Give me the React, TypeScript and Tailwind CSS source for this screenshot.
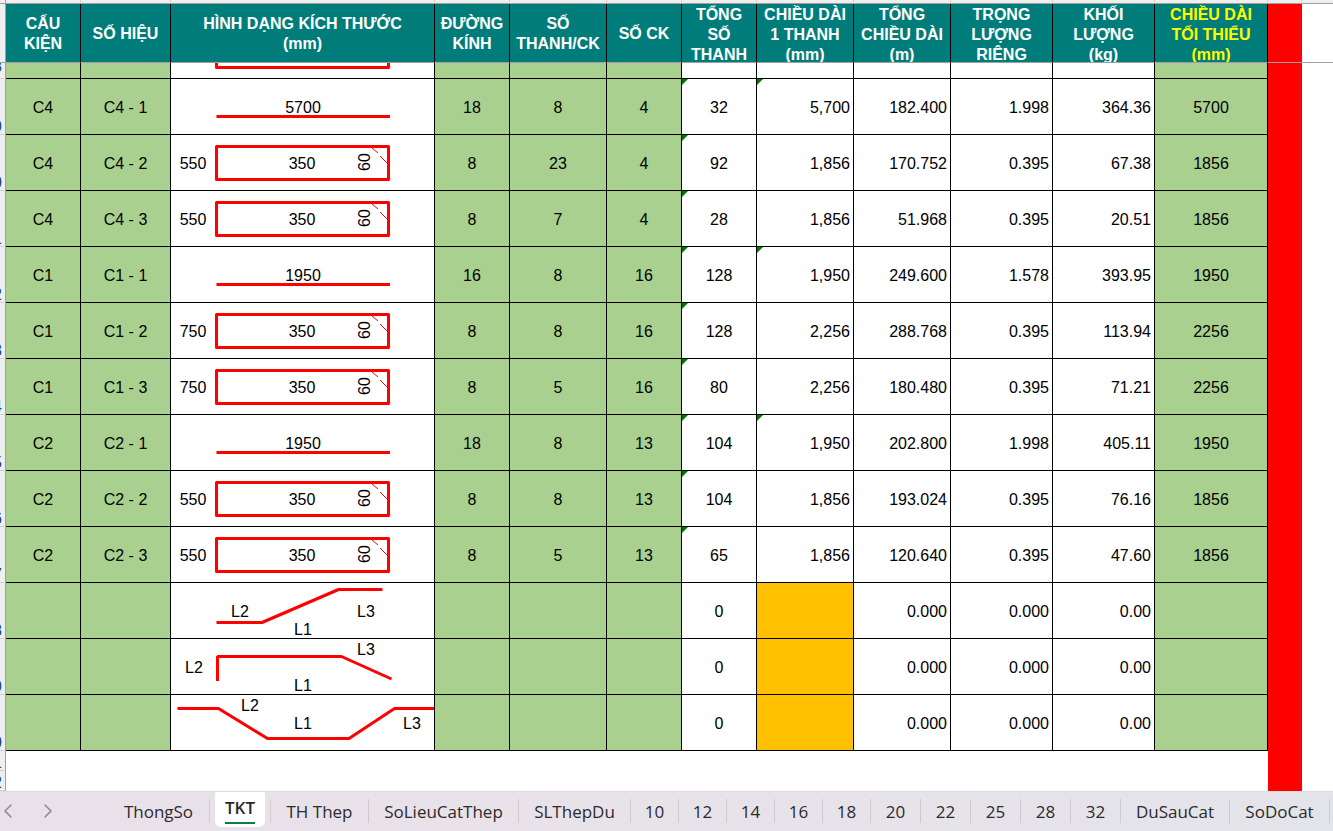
import React from "react";
import clsx from "clsx";
import { ChevronLeft, ChevronRight } from "lucide-react";

const columns = [
  { title: "CẤU\nKIỆN", width: "w-[75px]" },
  { title: "SỐ HIỆU", width: "w-[90px]" },
  { title: "HÌNH DẠNG KÍCH THƯỚC\n(mm)", width: "w-[264px]" },
  { title: "ĐƯỜNG\nKÍNH", width: "w-[75px]" },
  { title: "SỐ\nTHANH/CK", width: "w-[97px]" },
  { title: "SỐ CK", width: "w-[75px]" },
  { title: "TỔNG\nSỐ\nTHANH", width: "w-[75px]" },
  { title: "CHIỀU DÀI\n1 THANH\n(mm)", width: "w-[97px]" },
  { title: "TỔNG\nCHIỀU DÀI\n(m)", width: "w-[97px]" },
  { title: "TRỌNG\nLƯỢNG\nRIÊNG", width: "w-[102px]" },
  { title: "KHỐI\nLƯỢNG\n(kg)", width: "w-[102px]" },
  { title: "CHIỀU DÀI\nTỐI THIỂU\n(mm)", width: "w-[113px]" },
];

type Shape = "bar" | "stirrup" | "crankUp" | "hook" | "trough";

type Row = {
  no: number;
  shape: Shape;
  labels: string[];
  // cấu kiện, số hiệu, đường kính, số thanh/ck, số ck
  input: string[];
  total: string;
  length: string;
  // tổng chiều dài, trọng lượng riêng, khối lượng
  result: string[];
  min: string;
};

const rows: Row[] = [
  { no: 19, shape: "bar", labels: ["5700"], input: ["C4", "C4 - 1", "18", "8", "4"], total: "32", length: "5,700", result: ["182.400", "1.998", "364.36"], min: "5700" },
  { no: 20, shape: "stirrup", labels: ["550", "350", "60"], input: ["C4", "C4 - 2", "8", "23", "4"], total: "92", length: "1,856", result: ["170.752", "0.395", "67.38"], min: "1856" },
  { no: 21, shape: "stirrup", labels: ["550", "350", "60"], input: ["C4", "C4 - 3", "8", "7", "4"], total: "28", length: "1,856", result: ["51.968", "0.395", "20.51"], min: "1856" },
  { no: 22, shape: "bar", labels: ["1950"], input: ["C1", "C1 - 1", "16", "8", "16"], total: "128", length: "1,950", result: ["249.600", "1.578", "393.95"], min: "1950" },
  { no: 23, shape: "stirrup", labels: ["750", "350", "60"], input: ["C1", "C1 - 2", "8", "8", "16"], total: "128", length: "2,256", result: ["288.768", "0.395", "113.94"], min: "2256" },
  { no: 24, shape: "stirrup", labels: ["750", "350", "60"], input: ["C1", "C1 - 3", "8", "5", "16"], total: "80", length: "2,256", result: ["180.480", "0.395", "71.21"], min: "2256" },
  { no: 25, shape: "bar", labels: ["1950"], input: ["C2", "C2 - 1", "18", "8", "13"], total: "104", length: "1,950", result: ["202.800", "1.998", "405.11"], min: "1950" },
  { no: 26, shape: "stirrup", labels: ["550", "350", "60"], input: ["C2", "C2 - 2", "8", "8", "13"], total: "104", length: "1,856", result: ["193.024", "0.395", "76.16"], min: "1856" },
  { no: 27, shape: "stirrup", labels: ["550", "350", "60"], input: ["C2", "C2 - 3", "8", "5", "13"], total: "65", length: "1,856", result: ["120.640", "0.395", "47.60"], min: "1856" },
  { no: 28, shape: "crankUp", labels: [], input: ["", "", "", "", ""], total: "0", length: "", result: ["0.000", "0.000", "0.00"], min: "" },
  { no: 29, shape: "hook", labels: [], input: ["", "", "", "", ""], total: "0", length: "", result: ["0.000", "0.000", "0.00"], min: "" },
  { no: 30, shape: "trough", labels: [], input: ["", "", "", "", ""], total: "0", length: "", result: ["0.000", "0.000", "0.00"], min: "" },
];

const tabs = [
  { name: "TH Thep", width: "w-[98px]" },
  { name: "SoLieuCatThep", width: "w-[150px]" },
  { name: "SLThepDu", width: "w-[112px]" },
  { name: "10", width: "w-12" },
  { name: "12", width: "w-12" },
  { name: "14", width: "w-12" },
  { name: "16", width: "w-12" },
  { name: "18", width: "w-12" },
  { name: "20", width: "w-[50px]" },
  { name: "22", width: "w-[50px]" },
  { name: "25", width: "w-[50px]" },
  { name: "28", width: "w-[50px]" },
  { name: "32", width: "w-[50px]" },
  { name: "DuSauCat", width: "w-[109px]" },
  { name: "SoDoCat", width: "w-[100px]" },
];

const shapePaths: Record<Shape, string> = {
  bar: "M45.5 37.5H219",
  stirrup: "M45.5 11.5H217.5V44.5H45.5Z",
  crankUp: "M45.5 39.5H91L167.5 6.5H211.5",
  hook: "M46.5 42V17.5H170.5L220.5 40",
  trough: "M6.5 13.5H47.5L96.5 43.5H178L223.5 13.5H263",
};

// label positions [text, x, baseline] for the blank template rows
const templateLabels: Partial<Record<Shape, [string, number, number][]>> = {
  crankUp: [["L2", 69, 34], ["L1", 132, 52], ["L3", 195, 34]],
  hook: [["L2", 23, 34], ["L1", 132, 52], ["L3", 195, 16]],
  trough: [["L2", 79, 16], ["L1", 132, 34], ["L3", 241, 34]],
};

function BarShape({ shape, labels }: { shape: Shape; labels: string[] }) {
  return (
    <svg viewBox="0 0 263 55" className="block h-[55px] w-[263px] shrink-0" textAnchor="middle" fontSize="16">
      <path
        d={shapePaths[shape]}
        fill="none"
        stroke="#ff0000"
        strokeWidth="3"
        strokeLinejoin={shape === "stirrup" ? "round" : "bevel"}
      />
      {shape === "stirrup" && (
        <path d="M201 13L207 18M209 21L217 29" fill="none" stroke="#ff0000" strokeWidth="1" />
      )}
      {shape === "bar" && <text x="132" y="34">{labels[0]}</text>}
      {shape === "stirrup" && labels.length > 0 && (
        <>
          <text x="22" y="34">{labels[0]}</text>
          <text x="131" y="34">{labels[1]}</text>
          <text transform="translate(199 27) rotate(-90)">{labels[2]}</text>
        </>
      )}
      {templateLabels[shape]?.map(([text, x, y]) => (
        <text key={text} x={x} y={y}>{text}</text>
      ))}
    </svg>
  );
}

function RowNumber({ children }: { children: React.ReactNode }) {
  return (
    <th scope="row" className="border-r border-b border-r-[#a0a0a0] border-b-[#d0d0d0] bg-[#efefef] p-0 align-bottom font-normal">
      <div className="flex h-[15px] w-[5px] justify-end overflow-hidden pr-[3px] leading-4 text-[#1f3f77]">{children}</div>
    </th>
  );
}

function Cell({ className, children }: { className?: string; children?: React.ReactNode }) {
  return <td className={clsx("border-r border-b border-black px-0 pb-0", className)}>{children}</td>;
}

// green corner that marks an inconsistent formula
function ErrorMark() {
  return (
    <svg viewBox="0 0 6 6" className="absolute top-0 left-0 size-1.5">
      <path d="M0 0H6L0 6Z" fill="#007a00" />
    </svg>
  );
}

function Margin({ line = false }: { line?: boolean }) {
  return (
    <>
      <td className={clsx("bg-[#ff0000] p-0", line && "border-b border-[#a0a0a0]")} />
      <td className={clsx("p-0", line && "border-b border-[#a0a0a0]")} />
    </>
  );
}

function DataRow({ row }: { row: Row }) {
  const [part, mark, ...counts] = row.input;
  return (
    <tr className="h-14">
      <RowNumber>{row.no}</RowNumber>
      <Cell className="bg-[#a9d08e] pt-0.5 text-center">{part}</Cell>
      <Cell className="bg-[#a9d08e] pt-0.5 text-center">{mark}</Cell>
      <Cell className="pt-0">
        <BarShape shape={row.shape} labels={row.labels} />
      </Cell>
      {counts.map((value, i) => (
        <Cell key={i} className="bg-[#a9d08e] pt-0.5 text-center">{value}</Cell>
      ))}
      <Cell className="relative pt-0.5 text-center">
        {row.min && <ErrorMark />}
        {row.total}
      </Cell>
      <Cell className={clsx("relative pt-0.5 text-right", !row.length && "bg-[#ffc000]")}>
        {row.shape === "bar" && <ErrorMark />}
        <span className="pr-[3px]">{row.length}</span>
      </Cell>
      {row.result.map((value, i) => (
        <Cell key={i} className="pt-0.5 text-right">
          <span className="pr-[3px]">{value}</span>
        </Cell>
      ))}
      <Cell className="bg-[#a9d08e] pt-0.5 text-center">{row.min}</Cell>
      <Margin />
    </tr>
  );
}

function Sheet() {
  return (
    <table className="w-full table-fixed border-separate border-spacing-0 bg-white text-base leading-5 text-black">
      <colgroup>
        <col className="w-1.5" />
        {columns.map((c) => (
          <col key={c.title} className={c.width} />
        ))}
        <col className="w-[34px]" />
        <col />
      </colgroup>
      <thead>
        <tr className="h-1">
          <td className="border-r border-b border-[#a0a0a0] bg-[#efefef] p-0" />
          {columns.map((c) => (
            <td key={c.title} className="border-r border-b border-r-[#d0d0d0] border-b-[#a0a0a0] bg-[#efefef] p-0" />
          ))}
          <td className="border-r border-b border-r-[#d0d0d0] border-b-[#a0a0a0] bg-[#efefef] p-0" />
          <td className="border-b border-[#a0a0a0] bg-[#efefef] p-0" />
        </tr>
        <tr>
          <td className="border-r border-b border-[#a0a0a0] bg-[#efefef] p-0" />
          {columns.map((c, i) => (
            <th
              key={c.title}
              scope="col"
              className={clsx(
                "border-r border-b border-r-black border-b-[#a0a0a0] bg-[#007d7a] p-0 font-bold",
                i === columns.length - 1 ? "text-[#ffff00]" : "text-white"
              )}
            >
              <div className="flex h-[58px] overflow-hidden pt-px">
                <span className="m-auto whitespace-pre">{c.title}</span>
              </div>
            </th>
          ))}
          <Margin line />
        </tr>
      </thead>
      <tbody>
        {/* row 18 is scrolled half under the frozen header */}
        <tr className="h-4">
          <RowNumber>
            <span className="-mt-1">18</span>
          </RowNumber>
          {columns.map((c, i) => (
            <Cell key={c.title} className={clsx("pt-0", (i < 2 || (i > 2 && i < 6) || i === 11) && "bg-[#a9d08e]")}>
              {i === 2 && (
                <div className="flex h-[15px] items-end overflow-hidden">
                  <BarShape shape="stirrup" labels={[]} />
                </div>
              )}
            </Cell>
          ))}
          <Margin />
        </tr>
        {rows.map((row) => (
          <DataRow key={row.no} row={row} />
        ))}
        {[31, 32].map((no) => (
          <tr key={no} className="h-5">
            <RowNumber>{no}</RowNumber>
            <td colSpan={columns.length} className="p-0" />
            <Margin />
          </tr>
        ))}
      </tbody>
    </table>
  );
}

function TabBar() {
  return (
    <nav
      aria-label="Sheets"
      className="flex h-10 items-start overflow-hidden border-t border-[#dedade] bg-linear-to-r from-[#e9e1e9] via-[#e8e2e9] to-[#e3e4e9] font-['Open_Sans','Noto_Sans',sans-serif] text-[17px] text-[#2b2b2b]"
    >
      <button type="button" aria-label="Previous sheet" className="flex h-[38px] w-4 shrink-0 items-center justify-center text-[#8f8a90]">
        <ChevronLeft size={24} strokeWidth={1.5} className="shrink-0" />
      </button>
      <button type="button" aria-label="Next sheet" className="ml-6 flex h-[38px] w-4 shrink-0 items-center justify-center text-[#8f8a90]">
        <ChevronRight size={24} strokeWidth={1.5} className="shrink-0" />
      </button>
      <button type="button" className="mt-[7px] ml-[52px] h-6 w-[102px] shrink-0 border-r border-[#cdc9ce]">
        ThongSo
      </button>
      <button type="button" className="ml-[5px] flex h-[35px] w-[50px] shrink-0 justify-center rounded-b-md bg-white pt-1 font-semibold">
        <span className="h-7 border-b-2 border-[#107c41] leading-6">TKT</span>
      </button>
      <span className="mt-[7px] ml-[5px] h-6 w-px shrink-0 bg-[#cdc9ce]" />
      {tabs.map((tab) => (
        <button key={tab.name} type="button" className={clsx("mt-[7px] h-6 shrink-0 border-r border-[#cdc9ce]", tab.width)}>
          {tab.name}
        </button>
      ))}
    </nav>
  );
}

export default function App() {
  return (
    <div className="w-full overflow-hidden bg-white font-['Liberation_Sans',Arial,sans-serif]">
      <Sheet />
      <TabBar />
    </div>
  );
}
